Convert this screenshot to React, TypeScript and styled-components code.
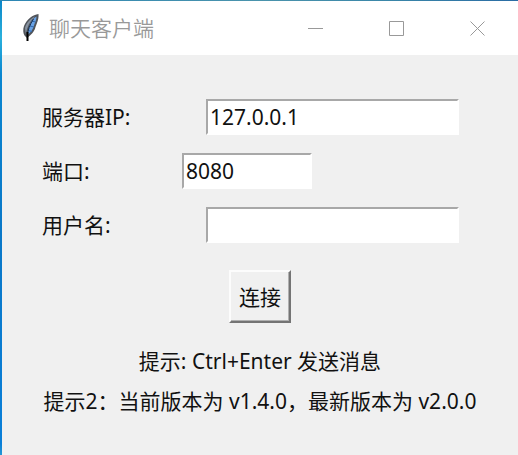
import React from "react";
import styled, { createGlobalStyle } from "styled-components";

const GlobalStyle = createGlobalStyle`
  * {
    box-sizing: border-box;
  }

  body {
    margin: 0;
    font-family: "Noto Sans", "Noto Sans CJK SC", sans-serif;
    font-size: 21px;
    line-height: 28px;
    color: #111;
  }
`;

const Desktop = styled.div`
  display: flex;
  min-height: 100vh;
  padding: 1px 0 0 2px;
  background:
    linear-gradient(90deg, #2c86b4, #4a93ac 50%, #3a86a8 75%, #2a6ca4) top / 100% 1px no-repeat,
    linear-gradient(#0a86c8, #2bb0dc 8%, #0a86d0 16%, #0a78c8 50%, #0a7fd8 95%, #3fb0d0);
`;

const Window = styled.main`
  flex: 1;
  display: flex;
  flex-direction: column;
  background: #f0f0f0;
`;

const TitleBar = styled.header`
  display: flex;
  align-items: center;
  height: 54px;
  padding-left: 16px;
  background: #fff;
`;

const Title = styled.h1`
  flex: 1;
  margin: 0 0 0 7px;
  font-size: 21px;
  font-weight: 350;
  color: #999;
`;

const CaptionButton = styled.button`
  display: flex;
  align-items: center;
  justify-content: center;
  width: 81px;
  height: 54px;
  padding: 0;
  border: 0;
  background: transparent;
  color: #999;
`;

const Form = styled.form`
  display: flex;
  flex-direction: column;
  padding: 44px 40px 40px;
`;

const Field = styled.div`
  display: flex;
  align-items: center;
  margin-bottom: 18px;
`;

const Label = styled.label<{ $width: number }>`
  flex: none;
  width: ${({ $width }) => $width}px;
`;

const TextBox = styled.input<{ $width: number }>`
  flex: 0 1 ${({ $width }) => $width}px;
  min-width: 0;
  height: 36px;
  padding: 0 2px;
  border: 2px solid;
  border-color: #a8a8a8 #fff #fff #a8a8a8;
  border-radius: 0;
  outline: 0;
  background: #fff;
  color: #111;
  font: inherit;
`;

const ConnectButton = styled.button`
  align-self: center;
  height: 53px;
  margin: 9px 0 24px;
  padding: 0 8px;
  border: 2px solid;
  border-color: #fcfcfc #747474 #747474 #fcfcfc;
  border-radius: 0;
  background: #f0f0f0;
  box-shadow: inset -1px -1px #b0b0b0;
  color: #111;
  font: inherit;
`;

const Hint = styled.p`
  margin: 0 0 12px;
  text-align: center;
`;

const Feather = () => (
  <svg width="24" height="30" viewBox="0 0 24 30" aria-hidden="true">
    <path
      d="M20.500 1C15 1.500 8.500 6.500 6 13c-1.200 3.500-1 7 .5 9.500L9 25l3-2.500c3.500-3 5-6 5.500-8.500L19 10c1.200-3 1.800-6 1.500-9Z"
      fill="#50545a"
    />
    <path d="M18.500 3.500c-4.500 2-7.500 8-8.700 18l2-1.500c3-3 3.700-6 4.700-9 1-2 2-5 2-7.500Z" fill="#69a3e6" />
    <path d="M17 3.500C12.500 5.500 8 10 7 15l.8 6C9 14 12 8 17 3.500Z" fill="#8792a0" />
    <path d="M13.500 8l4 1M12 13l4 1M10.500 17.500l3.500 1" stroke="#3169b0" strokeWidth="1" />
    <path d="M15.500 6C12 11 9.500 18 9.300 23" stroke="#183050" strokeWidth="1" fill="none" />
    <path d="M9.500 19V28" stroke="#000" strokeWidth="2" />
  </svg>
);

const CaptionIcon = ({ d }: { d: string }) => (
  <svg width="15" height="15" viewBox="0 0 15 15" fill="none" stroke="currentColor" aria-hidden="true">
    <path d={d} />
  </svg>
);

const captionButtons = [
  { name: "最小化", d: "M0 7.5H15" },
  { name: "最大化", d: "M.5 .5H14.5V14.5H.5Z" },
  { name: "关闭", d: "M.5 .5L14.5 14.5M14.5 .5L.5 14.5" },
];

const fields = [
  { id: "server-ip", label: "服务器IP:", value: "127.0.0.1", labelWidth: 164, width: 253 },
  { id: "port", label: "端口:", value: "8080", labelWidth: 140, width: 130 },
  { id: "username", label: "用户名:", value: "", labelWidth: 164, width: 253 },
];

export default function App() {
  return (
    <>
      <GlobalStyle />
      <Desktop>
        <Window>
          <TitleBar>
            <Feather />
            <Title>聊天客户端</Title>
            {captionButtons.map(({ name, d }) => (
              <CaptionButton key={name} type="button" aria-label={name}>
                <CaptionIcon d={d} />
              </CaptionButton>
            ))}
          </TitleBar>
          <Form onSubmit={(event) => event.preventDefault()}>
            {fields.map(({ id, label, value, labelWidth, width }) => (
              <Field key={id}>
                <Label htmlFor={id} $width={labelWidth}>
                  {label}
                </Label>
                <TextBox id={id} type="text" defaultValue={value} $width={width} />
              </Field>
            ))}
            <ConnectButton type="submit">连接</ConnectButton>
            <Hint>提示: Ctrl+Enter 发送消息</Hint>
            <Hint>提示2：当前版本为 v1.4.0，最新版本为 v2.0.0</Hint>
          </Form>
        </Window>
      </Desktop>
    </>
  );
}
